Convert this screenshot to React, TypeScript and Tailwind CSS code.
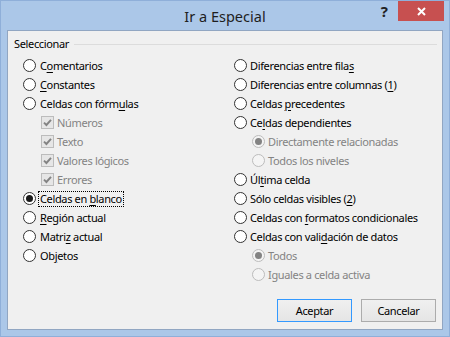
import React from "react";

const FONT = '"Noto Sans", "Open Sans", sans-serif';

function Radio({ checked = false, disabled = false }: { checked?: boolean; disabled?: boolean }) {
  return (
    <span
      className={
        "flex h-[13px] w-[13px] shrink-0 items-center justify-center rounded-full border " +
        (disabled ? "border-[#bcbcbc] bg-[#f4f4f4]" : "border-[#333333] bg-white")
      }
    >
      {checked && (
        <span className={"h-[7px] w-[7px] rounded-full " + (disabled ? "bg-[#838383]" : "bg-[#1a1a1a]")} />
      )}
    </span>
  );
}

function Check() {
  return (
    <span className="flex h-[13px] w-[13px] shrink-0 items-center justify-center border border-[#bcbcbc] bg-[#e6e6e6]">
      <svg width="11" height="11" viewBox="0 0 11 11">
        <path d="M2 5.6 L4.4 8 L9 2.8" fill="none" stroke="#838383" strokeWidth="1.9" />
      </svg>
    </span>
  );
}

function Row({
  control,
  slot = "w-[16px]",
  disabled = false,
  indent = "",
  children,
}: {
  control: React.ReactNode;
  slot?: string;
  disabled?: boolean;
  indent?: string;
  children: React.ReactNode;
}) {
  return (
    <div className={"flex h-[19px] items-center " + indent}>
      <div className={"flex shrink-0 " + slot}>{control}</div>
      <span className={"whitespace-nowrap " + (disabled ? "text-[#838383]" : "text-black")}>{children}</span>
    </div>
  );
}

const U = ({ children }: { children: React.ReactNode }) => (
  <span className="underline decoration-1 underline-offset-[2px]">{children}</span>
);

export default function App() {
  return (
    <div
      className="flex h-[337px] w-[450px] flex-col border border-[#8fafd9] bg-[#abc7e8] text-[11px] leading-[19px] tracking-[-0.35px]"
      style={{ fontFamily: FONT }}
    >
      <div className="relative flex h-[29px] shrink-0 items-center justify-center">
        <span className="text-[14.5px] leading-[20px] tracking-normal text-[#1e1e1e]">Ir a Especial</span>
        <span className="absolute right-[61px] top-0 text-[15px] font-bold leading-[20px] tracking-normal text-[#222]">
          ?
        </span>
        <div className="absolute right-[5px] top-0 flex h-[20px] w-[46px] items-center justify-center bg-[#c75050]">
          <svg width="9" height="9" viewBox="0 0 9 9">
            <path d="M1 1 L8 8 M8 1 L1 8" stroke="white" strokeWidth="2" />
          </svg>
        </div>
      </div>

      <div className="mx-[6px] mb-[6px] flex flex-1 flex-col border border-[#91a6c2] bg-[#f0f0f0]">
        <div className="mt-[6px] flex h-[14px] items-center pl-[6px] pr-[5px]">
          <span className="leading-[14px] text-black">Seleccionar</span>
          <div className="ml-[5px] h-px flex-1 bg-[#dcdcdc]" />
        </div>

        <div className="mt-[5px] flex pl-[15px]">
          <div className="flex w-[211px] flex-col">
            <Row slot="w-[17px]" control={<Radio />}>
              C<U>o</U>mentarios
            </Row>
            <Row slot="w-[17px]" control={<Radio />}>
              <U>C</U>onstantes
            </Row>
            <Row slot="w-[17px]" control={<Radio />}>
              Celdas con fórm<U>u</U>las
            </Row>
            <Row indent="pl-[18px]" control={<Check />} disabled>
              Números
            </Row>
            <Row indent="pl-[18px]" control={<Check />} disabled>
              Texto
            </Row>
            <Row indent="pl-[18px]" control={<Check />} disabled>
              Valores lógicos
            </Row>
            <Row indent="pl-[18px]" control={<Check />} disabled>
              Errores
            </Row>
            <div className="flex h-[19px] items-center">
              <div className="flex w-[15px] shrink-0">
                <Radio checked />
              </div>
              <span className="whitespace-nowrap border border-dotted border-black px-px leading-[14px] text-black">
                Celdas en <U>b</U>lanco
              </span>
            </div>
            <Row slot="w-[17px]" control={<Radio />}>
              <U>R</U>egión actual
            </Row>
            <Row slot="w-[17px]" control={<Radio />}>
              Matri<U>z</U> actual
            </Row>
            <Row slot="w-[17px]" control={<Radio />}>
              Ob<U>j</U>etos
            </Row>
          </div>

          <div className="flex flex-col">
            <Row control={<Radio />}>
              Diferencias entre fila<U>s</U>
            </Row>
            <Row control={<Radio />}>
              Diferencias entre columnas (<U>1</U>)
            </Row>
            <Row control={<Radio />}>
              Celdas <U>p</U>recedentes
            </Row>
            <Row control={<Radio />}>
              Ce<U>l</U>das dependientes
            </Row>
            <Row indent="pl-[18px]" control={<Radio checked disabled />} disabled>
              Directamente relacionadas
            </Row>
            <Row indent="pl-[18px]" control={<Radio disabled />} disabled>
              Todos los niveles
            </Row>
            <Row control={<Radio />}>
              Úl<U>t</U>ima celda
            </Row>
            <Row control={<Radio />}>
              Sólo celdas visibles (<U>2</U>)
            </Row>
            <Row control={<Radio />}>
              Celdas con <U>f</U>ormatos condicionales
            </Row>
            <Row control={<Radio />}>
              Celdas con vali<U>d</U>ación de datos
            </Row>
            <Row indent="pl-[18px]" control={<Radio checked disabled />} disabled>
              Todos
            </Row>
            <Row indent="pl-[18px]" control={<Radio disabled />} disabled>
              Iguales a celda activa
            </Row>
          </div>
        </div>

        <div className="mt-[15px] flex justify-end gap-[9px] pr-[6px]">
          <button className="flex h-[23px] w-[75px] items-center justify-center border border-[#3399ff] bg-gradient-to-b from-[#f0f0f0] to-[#e5e5e5] text-black">
            Aceptar
          </button>
          <button className="flex h-[23px] w-[75px] items-center justify-center border border-[#acacac] bg-gradient-to-b from-[#f0f0f0] to-[#e5e5e5] text-black">
            Cancelar
          </button>
        </div>
      </div>
    </div>
  );
}
